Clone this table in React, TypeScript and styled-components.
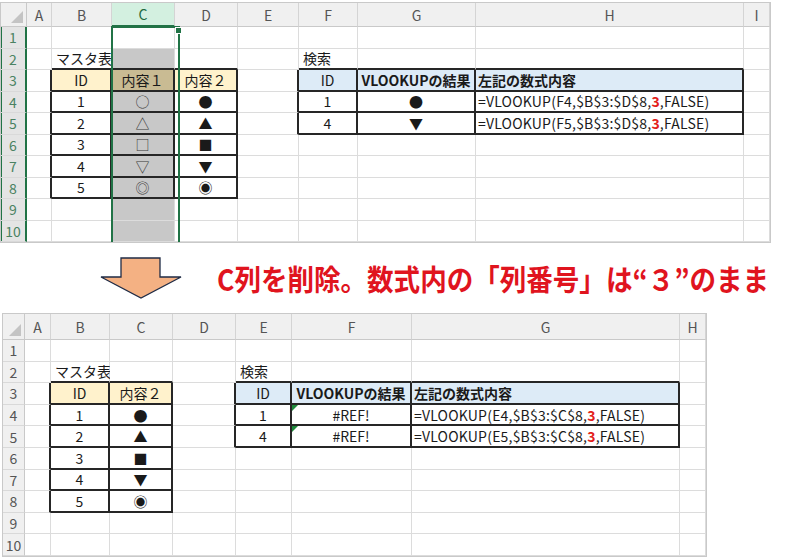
import React from 'react';
import styled, { createGlobalStyle, css } from 'styled-components';

const GREEN = '#217346';
const LINE = '#262626';
const GRID = '#dcdcdc';

const GlobalStyle = createGlobalStyle`
  html, body { margin: 0; padding: 0; background: #fff; }
  body { font-family: "Noto Sans CJK JP", "Noto Sans", sans-serif; }
`;

type Align = 'left' | 'center';
interface CellDef { text: React.ReactNode; align?: Align; bold?: boolean; muted?: boolean; err?: boolean; code?: boolean; }
interface TableDef { c1: number; r1: number; c2: number; r2: number; head: string; headSel?: string; }
interface SheetDef {
  letters: string[];
  widths: number[];
  rowHdr: number;
  headerH: number;
  rowH: number;
  ml: number;
  mt: number;
  cells: Record<string, CellDef>;
  tables: TableDef[];
  selCol?: number;
}

const Page = styled.div`
  width: 800px;
  height: 558px;
  display: flex;
  flex-direction: column;
  overflow: hidden;
  background: #fff;
`;

const Frame = styled.div<{ $ml: number; $mt: number; $cols: string; $rows: string }>`
  position: relative;
  margin-left: ${p => p.$ml}px;
  margin-top: ${p => p.$mt}px;
  align-self: flex-start;
  display: grid;
  grid-template-columns: ${p => p.$cols};
  grid-template-rows: ${p => p.$rows};
  border: 1px solid #c9c9c9;
  background: #fff;
  font-family: "Noto Sans CJK JP", "Noto Sans", sans-serif;
  overflow: hidden;
`;

const Corner = styled.div`
  position: relative;
  background: #f0f0f0;
  border-right: 1px solid #c9c9c9;
  border-bottom: 1px solid #c9c9c9;
  &::after {
    content: '';
    position: absolute;
    right: 3px;
    bottom: 3px;
    width: 0;
    height: 0;
    border-style: solid;
    border-width: 0 0 12px 12px;
    border-color: transparent transparent #c4c4c4 transparent;
  }
`;

const ColHead = styled.div<{ $sel?: boolean }>`
  display: flex;
  align-items: center;
  justify-content: center;
  font-size: 14px;
  color: #555;
  background: #f0f0f0;
  border-right: 1px solid #d4d4d4;
  border-bottom: 1px solid #c9c9c9;
  ${p => p.$sel && css`
    background: #d3f0e0;
    color: #1e6b41;
    border-bottom: 2px solid ${GREEN};
  `}
`;

const RowHead = styled.div<{ $sel?: boolean }>`
  display: flex;
  align-items: center;
  justify-content: center;
  font-size: 14px;
  color: #555;
  background: #f0f0f0;
  border-right: 1px solid #c9c9c9;
  border-bottom: 1px solid #d9d9d9;
  ${p => p.$sel && css`
    background: #e4e4e4;
    color: #4a8262;
    border-right: 2px solid ${GREEN};
    box-shadow: inset 1px 0 0 ${GREEN};
  `}
`;

const Cell = styled.div<{ $fill: string; $align: Align; $bold?: boolean; $br: boolean; $bb: boolean; $muted?: boolean; $code?: boolean }>`
  position: relative;
  display: flex;
  align-items: center;
  justify-content: ${p => (p.$align === 'center' ? 'center' : 'flex-start')};
  padding: 0 ${p => (p.$align === 'left' && !p.$code && !p.$bold ? '4px' : '2px')};
  background: ${p => p.$fill};
  border-right: ${p => (p.$br ? `2px solid ${LINE}` : `1px solid ${GRID}`)};
  border-bottom: ${p => (p.$bb ? `2px solid ${LINE}` : `1px solid ${GRID}`)};
  font-size: 14px;
  font-weight: ${p => (p.$bold ? 700 : 400)};
  letter-spacing: ${p => (p.$code ? '0.2px' : '0')};
  color: ${p => (p.$muted ? '#3a3a3a' : '#1a1a1a')};
  white-space: nowrap;
  min-width: 0;
`;

const ErrorMark = styled.span`
  position: absolute;
  left: 0;
  top: 0;
  width: 0;
  height: 0;
  border-style: solid;
  border-width: 6px 6px 0 0;
  border-color: #1f8a3c transparent transparent transparent;
`;

const Selection = styled.div<{ $left: number; $top: number; $width: number }>`
  position: absolute;
  left: ${p => p.$left - 1}px;
  top: ${p => p.$top - 1}px;
  width: ${p => p.$width + 2}px;
  bottom: -4px;
  border: 2px solid ${GREEN};
  pointer-events: none;
`;

const FillHandle = styled.span`
  position: absolute;
  right: -4px;
  top: -1px;
  width: 5px;
  height: 5px;
  background: ${GREEN};
  border: 1px solid #fff;
`;

const Hot = styled.span`
  color: #e3211c;
  font-weight: 700;
`;

const Notice = styled.div`
  height: 70px;
  display: flex;
  align-items: center;
  padding-left: 100px;
`;

const ArrowSvg = styled.svg`
  display: block;
  flex: none;
`;

const Message = styled.div`
  margin-left: 35px;
  font-family: "Noto Sans CJK JP", sans-serif;
  font-size: 29px;
  font-weight: 700;
  line-height: 1;
  color: #e0141e;
  white-space: nowrap;
  transform: scaleX(0.915);
  transform-origin: left center;
`;

function Sheet({ def }: { def: SheetDef }) {
  const cols = `${def.rowHdr}px ${def.widths.map(w => `${w}px`).join(' ')}`;
  const rows = `${def.headerH}px repeat(10, ${def.rowH}px)`;
  const tableAt = (r: number, c: number) =>
    def.tables.find(t => r >= t.r1 && r <= t.r2 && c >= t.c1 && c <= t.c2);
  const rowNums = Array.from({ length: 10 }, (_, i) => i + 1);
  const selLeft =
    def.selCol != null ? def.rowHdr + def.widths.slice(0, def.selCol).reduce((a, b) => a + b, 0) : 0;

  return (
    <Frame $ml={def.ml} $mt={def.mt} $cols={cols} $rows={rows}>
      <Corner />
      {def.letters.map((l, i) => (
        <ColHead key={l} $sel={i === def.selCol}>{l}</ColHead>
      ))}
      {rowNums.map(r => (
        <React.Fragment key={r}>
          <RowHead $sel={def.selCol != null}>{r}</RowHead>
          {def.letters.map((l, c) => {
            const t = tableAt(r, c);
            const cd = def.cells[`${l}${r}`];
            const selected = def.selCol === c && r >= 2;
            let fill = '#fff';
            if (t && r === t.r1) fill = t.head;
            if (selected) fill = t && r === t.r1 ? t.headSel || '#c9bb93' : '#c8c8c8';
            const br = !!t || !!tableAt(r, c + 1);
            const bb = !!t || !!tableAt(r + 1, c);
            return (
              <Cell
                key={l}
                $fill={fill}
                $align={cd?.align || 'center'}
                $bold={cd?.bold}
                $muted={cd?.muted}
                $code={cd?.code}
                $br={br}
                $bb={bb}
              >
                {cd?.err && <ErrorMark />}
                {cd?.text}
              </Cell>
            );
          })}
        </React.Fragment>
      ))}
      {def.selCol != null && (
        <Selection $left={selLeft} $top={def.headerH} $width={def.widths[def.selCol]}>
          <FillHandle />
        </Selection>
      )}
    </Frame>
  );
}

const formula = (ref: string, range: string) => (
  <>
    =VLOOKUP({ref},{range},<Hot>3</Hot>,FALSE)
  </>
);

const YELLOW = '#fff2cc';
const BLUE = '#ddebf7';

const topSheet: SheetDef = {
  letters: ['A', 'B', 'C', 'D', 'E', 'F', 'G', 'H', 'I'],
  widths: [25, 60, 63, 63, 61, 59, 118, 268, 26],
  rowHdr: 26,
  headerH: 24,
  rowH: 21.5,
  ml: 0,
  mt: 2,
  selCol: 2,
  tables: [
    { c1: 1, r1: 3, c2: 3, r2: 8, head: YELLOW, headSel: '#c9bb93' },
    { c1: 5, r1: 3, c2: 7, r2: 5, head: BLUE },
  ],
  cells: {
    B2: { text: 'マスタ表', align: 'left' },
    B3: { text: 'ID' },
    C3: { text: '内容１' },
    D3: { text: '内容２' },
    B4: { text: '1' }, C4: { text: '○', muted: true }, D4: { text: '●' },
    B5: { text: '2' }, C5: { text: '△', muted: true }, D5: { text: '▲' },
    B6: { text: '3' }, C6: { text: '□', muted: true }, D6: { text: '■' },
    B7: { text: '4' }, C7: { text: '▽', muted: true }, D7: { text: '▼' },
    B8: { text: '5' }, C8: { text: '◎', muted: true }, D8: { text: '◉' },
    F2: { text: '検索', align: 'left' },
    F3: { text: 'ID' },
    G3: { text: 'VLOOKUPの結果', bold: true },
    H3: { text: '左記の数式内容', bold: true, align: 'left' },
    F4: { text: '1' }, G4: { text: '●' }, H4: { text: formula('F4', '$B$3:$D$8'), align: 'left', code: true },
    F5: { text: '4' }, G5: { text: '▼' }, H5: { text: formula('F5', '$B$3:$D$8'), align: 'left', code: true },
  },
};

const bottomSheet: SheetDef = {
  letters: ['A', 'B', 'C', 'D', 'E', 'F', 'G', 'H'],
  widths: [26, 59, 63, 63, 56, 120, 268, 26],
  rowHdr: 22,
  headerH: 26,
  rowH: 21.6,
  ml: 2,
  mt: 0,
  tables: [
    { c1: 1, r1: 3, c2: 2, r2: 8, head: YELLOW },
    { c1: 4, r1: 3, c2: 6, r2: 5, head: BLUE },
  ],
  cells: {
    B2: { text: 'マスタ表', align: 'left' },
    B3: { text: 'ID' },
    C3: { text: '内容２' },
    B4: { text: '1' }, C4: { text: '●' },
    B5: { text: '2' }, C5: { text: '▲' },
    B6: { text: '3' }, C6: { text: '■' },
    B7: { text: '4' }, C7: { text: '▼' },
    B8: { text: '5' }, C8: { text: '◉' },
    E2: { text: '検索', align: 'left' },
    E3: { text: 'ID' },
    F3: { text: 'VLOOKUPの結果', bold: true },
    G3: { text: '左記の数式内容', bold: true, align: 'left' },
    E4: { text: '1' }, F4: { text: '#REF!', err: true }, G4: { text: formula('E4', '$B$3:$C$8'), align: 'left', code: true },
    E5: { text: '4' }, F5: { text: '#REF!', err: true }, G5: { text: formula('E5', '$B$3:$C$8'), align: 'left', code: true },
  },
};

export default function App() {
  return (
    <Page>
      <GlobalStyle />
      <Sheet def={topSheet} />
      <Notice>
        <ArrowSvg width="82" height="42" viewBox="0 0 82 42">
          <polygon
            points="21,1 60,1 60,20 81,20 41,41 1,20 21,20"
            fill="#f4b183"
            stroke="#1f2b45"
            strokeWidth="1.3"
            strokeLinejoin="miter"
          />
        </ArrowSvg>
        <Message>C列を削除。数式内の「列番号」は“３”のまま</Message>
      </Notice>
      <Sheet def={bottomSheet} />
    </Page>
  );
}
